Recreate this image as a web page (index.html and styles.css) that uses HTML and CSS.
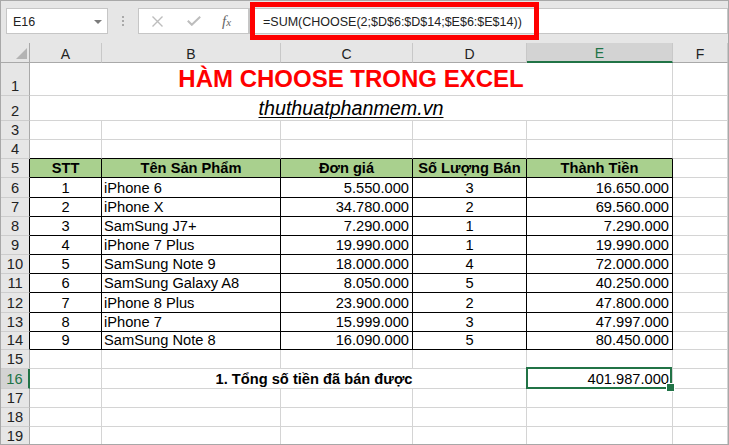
FILE: index.html
```html
<!DOCTYPE html>
<html lang="vi">
<head>
<meta charset="utf-8">
<title>Hàm CHOOSE trong Excel</title>
<link rel="stylesheet" href="styles.css">
</head>
<body>
<div class="app">
  <div class="fbar">
    <div class="namebox">
      <span>E16</span>
      <svg class="dd" width="8" height="4" viewBox="0 0 8 4"><path d="M0 0H8L4 4Z" fill="#7b7b7b"/></svg>
    </div>
    <div class="grip"><i></i><i></i><i></i></div>
    <div class="fxbox">
      <svg class="ico-x" width="11" height="11" viewBox="0 0 11 11"><path d="M0.5 0.5L10.5 10.5M10.5 0.5L0.5 10.5" stroke="#bdbdbd" stroke-width="1.4" fill="none"/></svg>
      <svg class="ico-ok" width="14" height="10" viewBox="0 0 14 10"><path d="M0.8 4.8L4.8 8.8L13.2 0.8" stroke="#bdbdbd" stroke-width="2" fill="none"/></svg>
      <span class="fx">f<span class="fxs">x</span></span>
    </div>
    <div class="formula">
      <span class="ftext">=SUM(CHOOSE(2;$D$6:$D$14;$E$6:$E$14))</span>
      <span class="mark"></span>
    </div>
  </div>

  <div class="sheet">
    <!-- column headers -->
    <div class="h corner"><svg width="11" height="11" viewBox="0 0 11 11"><path d="M11 0V11H0Z" fill="#b4b4b4"/></svg></div>
    <div class="h">A</div>
    <div class="h">B</div>
    <div class="h">C</div>
    <div class="h">D</div>
    <div class="h sel">E</div>
    <div class="h">F</div>

    <!-- row 1 -->
    <div class="r">1</div>
    <div class="c title span-ae">HÀM CHOOSE TRONG EXCEL</div>
    <div class="c"></div>

    <!-- row 2 -->
    <div class="r">2</div>
    <div class="c site span-ae">thuthuatphanmem.vn</div>
    <div class="c"></div>

    <!-- row 3 -->
    <div class="r">3</div>
    <div class="c"></div><div class="c"></div><div class="c"></div><div class="c"></div><div class="c"></div><div class="c"></div>

    <!-- row 4 -->
    <div class="r">4</div>
    <div class="c bb"></div><div class="c bb"></div><div class="c bb"></div><div class="c bb"></div><div class="c bb"></div><div class="c"></div>

    <!-- row 5 -->
    <div class="r tb">5</div>
    <div class="c k th">STT</div>
    <div class="c k th">Tên Sản Phẩm</div>
    <div class="c k th">Đơn giá</div>
    <div class="c k th">Số Lượng Bán</div>
    <div class="c k th">Thành Tiền</div>
    <div class="c"></div>

    <div class="r tb">6</div>
    <div class="c k ctr">1</div><div class="c k lf">iPhone 6</div><div class="c k rt">5.550.000</div><div class="c k ctr">3</div><div class="c k rt">16.650.000</div><div class="c"></div>

    <div class="r tb">7</div>
    <div class="c k ctr">2</div><div class="c k lf">iPhone X</div><div class="c k rt">34.780.000</div><div class="c k ctr">2</div><div class="c k rt">69.560.000</div><div class="c"></div>

    <div class="r tb">8</div>
    <div class="c k ctr">3</div><div class="c k lf">SamSung J7+</div><div class="c k rt">7.290.000</div><div class="c k ctr">1</div><div class="c k rt">7.290.000</div><div class="c"></div>

    <div class="r tb">9</div>
    <div class="c k ctr">4</div><div class="c k lf">iPhone 7 Plus</div><div class="c k rt">19.990.000</div><div class="c k ctr">1</div><div class="c k rt">19.990.000</div><div class="c"></div>

    <div class="r tb">10</div>
    <div class="c k ctr">5</div><div class="c k lf">SamSung Note 9</div><div class="c k rt">18.000.000</div><div class="c k ctr">4</div><div class="c k rt">72.000.000</div><div class="c"></div>

    <div class="r tb">11</div>
    <div class="c k ctr">6</div><div class="c k lf">SamSung Galaxy A8</div><div class="c k rt">8.050.000</div><div class="c k ctr">5</div><div class="c k rt">40.250.000</div><div class="c"></div>

    <div class="r tb">12</div>
    <div class="c k ctr">7</div><div class="c k lf">iPhone 8 Plus</div><div class="c k rt">23.900.000</div><div class="c k ctr">2</div><div class="c k rt">47.800.000</div><div class="c"></div>

    <div class="r tb">13</div>
    <div class="c k ctr">8</div><div class="c k lf">iPhone 7</div><div class="c k rt">15.999.000</div><div class="c k ctr">3</div><div class="c k rt">47.997.000</div><div class="c"></div>

    <div class="r tb">14</div>
    <div class="c k ctr">9</div><div class="c k lf">SamSung Note 8</div><div class="c k rt">16.090.000</div><div class="c k ctr">5</div><div class="c k rt">80.450.000</div><div class="c"></div>

    <!-- row 15 -->
    <div class="r">15</div>
    <div class="c"></div><div class="c"></div><div class="c"></div><div class="c"></div><div class="c"></div><div class="c"></div>

    <!-- row 16 -->
    <div class="r sel">16</div>
    <div class="c"></div>
    <div class="c total span-bd">1. Tổng số tiền đã bán được</div>
    <div class="c rt active">401.987.000</div>
    <div class="c"></div>

    <!-- rows 17-19 -->
    <div class="r">17</div>
    <div class="c"></div><div class="c"></div><div class="c"></div><div class="c"></div><div class="c"></div><div class="c"></div>
    <div class="r">18</div>
    <div class="c"></div><div class="c"></div><div class="c"></div><div class="c"></div><div class="c"></div><div class="c"></div>
    <div class="r">19</div>
    <div class="c"></div><div class="c"></div><div class="c"></div><div class="c"></div><div class="c"></div><div class="c"></div>
  </div>
</div>
</body>
</html>
```

FILE: styles.css
```css
* { box-sizing: border-box; }
html, body { margin: 0; padding: 0; }
body {
  width: 729px;
  height: 445px;
  overflow: hidden;
  background: #ffffff;
  font-family: "Liberation Sans", Arial, sans-serif;
}

.app {
  width: 729px;
  height: 445px;
  border: 1px solid #a8a8a8;
  overflow: hidden;
  display: flex;
  flex-direction: column;
  background: #e6e6e6;
}

/* ---------- formula bar ---------- */
.fbar {
  flex: none;
  height: 42px;
  display: flex;
  align-items: flex-start;
  padding-top: 7px;
  background: #e6e6e6;
}
.namebox {
  margin-left: 5px;
  width: 102px;
  height: 26px;
  background: #fff;
  border: 1px solid #c6c6c6;
  display: flex;
  align-items: center;
  justify-content: space-between;
  padding: 1px 5px 0 6px;
  font-size: 12.5px;
  color: #222;
}
.grip {
  flex: none;
  width: 30px;
  height: 26px;
  display: flex;
  flex-direction: column;
  align-items: center;
  justify-content: center;
  gap: 2px;
}
.grip i {
  display: block;
  width: 2px;
  height: 2px;
  background: #a9a9a9;
}
.fxbox {
  flex: none;
  width: 111px;
  height: 26px;
  background: #fff;
  border: 1px solid #c6c6c6;
  display: flex;
  align-items: center;
  padding-left: 13px;
}
.ico-x { flex: none; }
.ico-ok { flex: none; margin-left: 24px; }
.fx {
  margin-left: 21px;
  font-family: "Liberation Serif", "Times New Roman", serif;
  font-style: italic;
  font-size: 15px;
  color: #666;
  line-height: 1;
}
.fxs { font-size: 11px; }
.formula {
  flex: 1;
  height: 26px;
  background: #fff;
  border: 1px solid #c6c6c6;
  position: relative;
  display: flex;
  align-items: center;
  padding: 2px 0 0 13px;
  font-size: 12.5px;
  color: #222;
}
.mark {
  position: absolute;
  left: 0;
  top: -7px;
  width: 289px;
  height: 38px;
  border: 5px solid #ff0000;
}

/* ---------- sheet grid ---------- */
.sheet {
  flex: none;
  display: grid;
  grid-template-columns: 29px 72px 179px 132px 114px 146px 55px;
  grid-template-rows: 20px 33px 25px 19px 19px 19px 20px 19px 19px 19px 19px 19px 20px 19px 18px 19px 20px 19px 19px 19px;
  background: #fff;
}

.h {
  background: #e6e6e6;
  border-right: 1px solid #c8c8c8;
  border-bottom: 1px solid #a9a9a9;
  display: flex;
  align-items: center;
  justify-content: center;
  padding-top: 2px;
  font-size: 14px;
  color: #222;
}
.h.corner {
  border-right-color: #a9a9a9;
  align-items: flex-end;
  justify-content: flex-end;
  padding: 0 2px 3px 0;
}
.h.sel {
  background: #d3d3d3;
  color: #217346;
  border-bottom: 2px solid #217346;
}

.r {
  background: #e6e6e6;
  border-right: 1px solid #a9a9a9;
  border-bottom: 1px solid #cdcdcd;
  display: flex;
  align-items: flex-end;
  justify-content: center;
  font-size: 14.67px;
  line-height: 17px;
  color: #222;
}
.r.tb { border-right-color: #000; }
.r.sel {
  background: #d3d3d3;
  color: #217346;
  border-right: 2px solid #217346;
}

.c {
  min-width: 0;
  border-right: 1px solid #d4d4d4;
  border-bottom: 1px solid #d4d4d4;
  display: flex;
  align-items: flex-end;
  padding: 0 3px;
  font-size: 14.67px;
  line-height: 17px;
  white-space: nowrap;
  overflow: hidden;
  color: #000;
}
.c.bb { border-bottom-color: #000; }
.c.k { border-right-color: #000; border-bottom-color: #000; }
.c.th {
  background: #a9d08e;
  font-weight: bold;
  justify-content: center;
}
.ctr { justify-content: center; }
.rt { justify-content: flex-end; }
.lf { padding-left: 2px; }

.span-ae { grid-column: 2 / 7; }
.span-bd { grid-column: 3 / 6; }

.title {
  justify-content: center;
  align-items: center;
  font-size: 24px;
  line-height: 28px;
  font-weight: bold;
  color: #ff0000;
}
.site {
  justify-content: center;
  align-items: center;
  font-size: 19.7px;
  line-height: 22px;
  font-style: italic;
  text-decoration: underline;
  text-decoration-thickness: 1px;
  text-underline-offset: 2px;
}
.total {
  justify-content: center;
  font-weight: bold;
}

.active {
  position: relative;
  overflow: visible;
  z-index: 2;
}
.active::before {
  content: "";
  position: absolute;
  left: -1px;
  top: -2px;
  right: 0;
  bottom: -1px;
  border: 2px solid #217346;
}
.active::after {
  content: "";
  position: absolute;
  right: -3px;
  bottom: -4px;
  width: 7px;
  height: 7px;
  background: #217346;
  border: 1px solid #fff;
}
```
